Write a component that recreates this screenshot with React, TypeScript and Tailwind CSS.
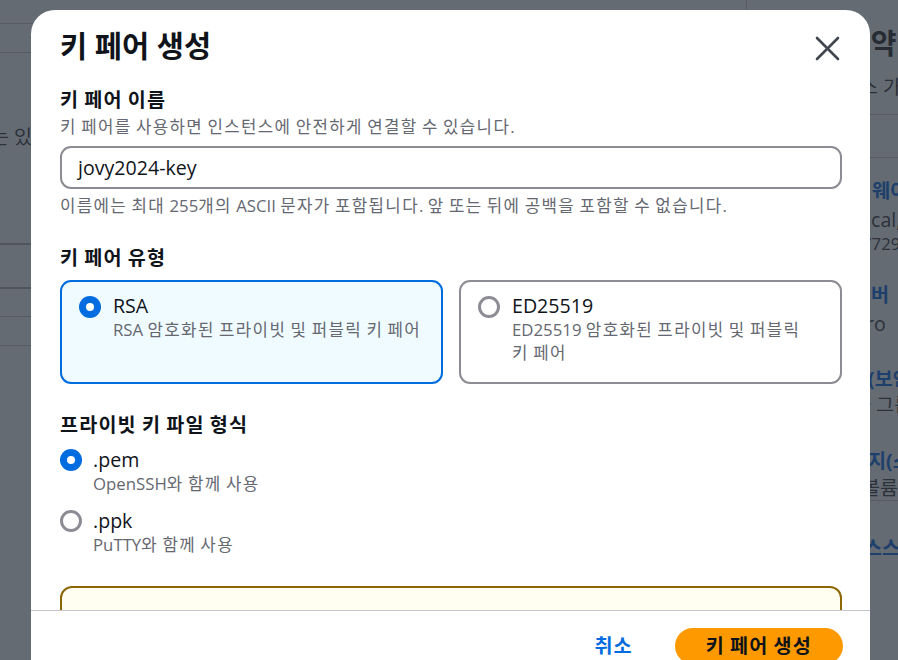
import React from "react";

function K({ t, bold }: { t: string; bold?: boolean }) {
  const parts = t.split(/([\uAC00-\uD7A3]+)/);
  return (
    <span>
      {parts.map((p, i) =>
        /[\uAC00-\uD7A3]/.test(p) ? (
          <span key={i} className={bold ? "tracking-[0.06em]" : "tracking-[0.08em]"}>
            {p}
          </span>
        ) : (
          <React.Fragment key={i}>{p}</React.Fragment>
        )
      )}
    </span>
  );
}

function RadioDot({ checked }: { checked: boolean }) {
  return checked ? (
    <span className="flex h-[22px] w-[22px] shrink-0 items-center justify-center rounded-full bg-[#006ce0]">
      <span className="h-[8px] w-[8px] rounded-full bg-white" />
    </span>
  ) : (
    <span className="block h-[22px] w-[22px] shrink-0 rounded-full border-[3px] border-[#8c8c94] bg-white" />
  );
}

function Card({ checked, title, lines }: { checked: boolean; title: string; lines: string[] }) {
  return (
    <div
      className={
        checked
          ? "flex h-[104px] gap-[12px] rounded-[11px] border-2 border-[#006ce0] bg-[#f0fbff] pl-[17px] pr-[10px] pt-[12px]"
          : "flex h-[104px] gap-[12px] rounded-[11px] border-2 border-[#8c8c94] bg-white pl-[17px] pr-[10px] pt-[12px]"
      }
    >
      <div className="pt-[2px]">
        <RadioDot checked={checked} />
      </div>
      <div className="min-w-0 flex-1">
        <div className="text-[19.6px] leading-[24px] text-[#0f141a]">{title}</div>
        {lines.map((l, i) => (
          <div key={i} className="whitespace-nowrap text-[16.8px] leading-[23px] text-[#656871]">
            <K t={l} />
          </div>
        ))}
      </div>
    </div>
  );
}

function Option({ checked, title, desc, mt }: { checked: boolean; title: string; desc: string; mt: string }) {
  return (
    <div className={"flex gap-[11px] " + mt}>
      <div className="pt-[1px]">
        <RadioDot checked={checked} />
      </div>
      <div>
        <div className="text-[19.6px] leading-[24px] text-[#0f141a]">{title}</div>
        <div className="text-[16.8px] leading-[24px] text-[#656871]">
          <K t={desc} />
        </div>
      </div>
    </div>
  );
}

function Label({ t, mt }: { t: string; mt: string }) {
  return (
    <div className={"text-[19.6px] font-bold leading-[26px] text-[#0f141a] " + mt}>
      <K t={t} bold />
    </div>
  );
}

export default function App() {
  return (
    <div className="relative h-[660px] w-[898px] overflow-hidden bg-[#656b73] font-['Open_Sans','Noto_Sans_CJK_KR',sans-serif]">
      {/* dimmed page behind the modal */}
      <div className="flex h-full">
        <div className="w-[300px] overflow-hidden text-[#2c313a]">
          <div className="h-[23px]" />
          <div className="h-[29px] border-t border-[#565b65]" />
          <div className="h-[191px] border-t border-[#565b65]">
            <div className="-ml-[9px] mt-[70px] whitespace-nowrap text-[19.6px] leading-[28px]">는 있습니다</div>
          </div>
          <div className="h-[44px] border-t-2 border-[#4f545e]" />
          <div className="h-[29px] border-t-2 border-[#4f545e]" />
          <div className="h-[29px] border-t border-[#565b65]" />
          <div className="border-t border-[#565b65]" />
        </div>
        <div className="flex-1">
          <div className="ml-[446px] h-[10px] border-l border-[#565b65]" />
        </div>
        <div className="w-[56px] overflow-hidden whitespace-nowrap pl-[18px] text-[#2c313a]">
          <div className="-ml-[15px] mt-[26px] text-[28px] font-bold leading-[34px] text-[#262b34]">요약</div>
          <div className="mt-[14px] text-[19.6px] leading-[26px]">스 가</div>
          <div className="mt-[14px] h-[43px] border-t border-[#565b65]" />
          <div className="h-[17px] border-t border-[#565b65]" />
          <div className="ml-[12px] mt-[2px] text-[19.6px] font-bold leading-[30px] text-[#1d3f6b]">웨이</div>
          <div className="ml-[11px] text-[19.6px] leading-[28px]">cal,</div>
          <div className="ml-[2px] text-[16.8px] leading-[20px]">7729</div>
          <div className="-ml-[7px] mt-[26px] text-[19.6px] font-bold leading-[30px] text-[#1d3f6b]">서버</div>
          <div className="ml-[6px] text-[19.6px] leading-[28px]">ro</div>
          <div className="ml-[8px] mt-[26px] text-[19.6px] font-bold leading-[30px] text-[#1d3f6b]">(보안</div>
          <div className="-ml-[7px] text-[19.6px] leading-[22px]">과 그룹</div>
          <div className="ml-[8px] mt-[30px] text-[19.6px] font-bold leading-[30px] text-[#1d3f6b]">지(스</div>
          <div className="ml-[2px] text-[19.6px] leading-[24px]">볼륨</div>
          <div className="h-[36px] border-t border-[#565b65]" />
          <div className="ml-[4px] text-[19.6px] font-bold leading-[24px] text-[#1d3f6b]">스스</div>
        </div>
      </div>

      {/* modal */}
      <div className="absolute left-[31px] top-[10px] flex h-[660px] w-[839px] flex-col rounded-t-[24px] bg-white">
        <div className="h-[600px] overflow-hidden pl-[29px] pr-[28px]">
          <div className="flex items-start justify-between pt-[15px]">
            <h2 className="text-[29.5px] font-bold leading-[42px] text-[#0f141a]">키 페어 생성</h2>
            <svg className="mt-[8px]" width="30" height="30" viewBox="0 0 30 30" fill="none">
              <path d="M5 5 L26 26 M26 5 L5 26" stroke="#424650" strokeWidth="2.6" strokeLinecap="round" />
            </svg>
          </div>

          <Label t="키 페어 이름" mt="mt-[20px]" />
          <div className="mt-[2px] text-[16.8px] leading-[24px] text-[#656871]">
            <K t="키 페어를 사용하면 인스턴스에 안전하게 연결할 수 있습니다." />
          </div>
          <div className="mt-[7px] flex h-[43px] items-center rounded-[11px] border-2 border-[#8c8c94] pl-[16px] text-[19.6px] text-[#0f141a]">
            jovy2024-key
          </div>
          <div className="mt-[5px] text-[16.8px] leading-[24px] text-[#656871]">
            <K t="이름에는 최대 255개의 ASCII 문자가 포함됩니다. 앞 또는 뒤에 공백을 포함할 수 없습니다." />
          </div>

          <Label t="키 페어 유형" mt="mt-[27px]" />
          <div className="mt-[9px] grid grid-cols-2 gap-[16px]">
            <Card checked title="RSA" lines={["RSA 암호화된 프라이빗 및 퍼블릭 키 페어"]} />
            <Card checked={false} title="ED25519" lines={["ED25519 암호화된 프라이빗 및 퍼블릭", "키 페어"]} />
          </div>

          <Label t="프라이빗 키 파일 형식" mt="mt-[28px]" />
          <Option checked title=".pem" desc="OpenSSH와 함께 사용" mt="mt-[10px]" />
          <Option checked={false} title=".ppk" desc="PuTTY와 함께 사용" mt="mt-[13px]" />

          <div className="mt-[29px] h-[80px] rounded-[12px] border-2 border-[#8d6605] bg-[#fffef0]" />
        </div>

        <div className="flex items-start justify-end gap-[42px] border-t border-[#c6c6cd] pr-[27px] pt-[17px]">
          <span className="flex h-[36px] items-center text-[19.6px] font-bold text-[#006ce0]">
            <K t="취소" bold />
          </span>
          <span className="flex h-[36px] items-center rounded-full bg-[#ff9900] px-[31px] text-[19.6px] font-bold text-[#0f141a]">
            <K t="키 페어 생성" bold />
          </span>
        </div>
      </div>
    </div>
  );
}
